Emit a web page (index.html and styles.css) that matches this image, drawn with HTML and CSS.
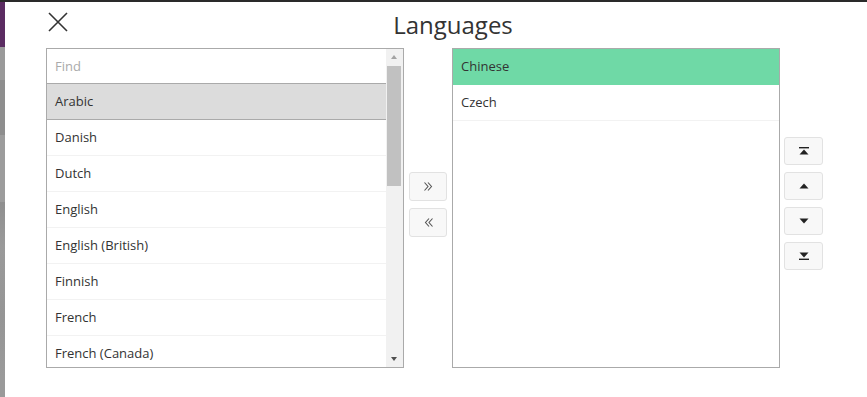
FILE: index.html
```html
<!DOCTYPE html>
<html>
<head>
<meta charset="utf-8">
<link rel="stylesheet" href="styles.css">
</head>
<body>
<div class="topbar"></div>
<div class="frame">
  <div class="backdrop">
    <div class="bd-purple"></div>
    <div class="bd-grey"></div>
  </div>
  <div class="modal">
    <div class="header">
      <button class="close" aria-label="Close">
        <svg width="20" height="20" viewBox="0 0 20 20"><path d="M1 1 L19 19 M19 1 L1 19" stroke="#333" stroke-width="1.6" fill="none"/></svg>
      </button>
      <h1 class="title">Languages</h1>
    </div>
    <div class="main">
      <div class="list list-left">
        <div class="list-body">
          <div class="row find">Find</div>
          <div class="row sel">Arabic</div>
          <div class="row">Danish</div>
          <div class="row">Dutch</div>
          <div class="row">English</div>
          <div class="row">English (British)</div>
          <div class="row">Finnish</div>
          <div class="row">French</div>
          <div class="row last">French (Canada)</div>
        </div>
        <div class="scrollbar">
          <div class="sb-arrow up"></div>
          <div class="sb-track"><div class="sb-thumb"></div></div>
          <div class="sb-arrow down"></div>
        </div>
      </div>
      <div class="mid-btns">
        <button class="btn">
          <svg width="11" height="11" viewBox="0 0 11 11"><path d="M1.5 1.5 L5 5.5 L1.5 9.5 M5 1.5 L8.5 5.5 L5 9.5" stroke="#555" stroke-width="1.1" fill="none"/></svg>
        </button>
        <button class="btn">
          <svg width="11" height="11" viewBox="0 0 11 11"><path d="M9.5 1.5 L6 5.5 L9.5 9.5 M6 1.5 L2.5 5.5 L6 9.5" stroke="#555" stroke-width="1.1" fill="none"/></svg>
        </button>
      </div>
      <div class="list list-right">
        <div class="list-body">
          <div class="row active">Chinese</div>
          <div class="row">Czech</div>
        </div>
      </div>
      <div class="side-btns">
        <button class="btn btn-sm">
          <svg width="10" height="8" viewBox="0 0 10 8"><rect x="0" y="0" width="10" height="1.4" fill="#222"/><path d="M0.5 7.5 L5 2.5 L9.5 7.5 Z" fill="#222"/></svg>
        </button>
        <button class="btn btn-sm">
          <svg width="10" height="6" viewBox="0 0 10 6"><path d="M0.5 5.5 L5 0.5 L9.5 5.5 Z" fill="#222"/></svg>
        </button>
        <button class="btn btn-sm">
          <svg width="10" height="6" viewBox="0 0 10 6"><path d="M0.5 0.5 L5 5.5 L9.5 0.5 Z" fill="#222"/></svg>
        </button>
        <button class="btn btn-sm">
          <svg width="10" height="8" viewBox="0 0 10 8"><path d="M0.5 0.5 L5 5.5 L9.5 0.5 Z" fill="#222"/><rect x="0" y="6.6" width="10" height="1.4" fill="#222"/></svg>
        </button>
      </div>
    </div>
  </div>
</div>
</body>
</html>
```
FILE: styles.css
```css
* { box-sizing: border-box; }
html, body { margin: 0; padding: 0; }
body {
  width: 867px;
  height: 397px;
  overflow: hidden;
  background: #fff;
  font-family: "Open Sans", "Noto Sans", sans-serif;
  color: #333;
}
.topbar { height: 2px; background: #2a2a2a; }
.frame { display: flex; height: 395px; }
.backdrop { width: 5px; display: flex; flex-direction: column; }
.bd-purple { height: 45px; background: #5b2c62; }
.bd-grey { flex: 1; background: linear-gradient(#9a9a9a 0, #9a9a9a 33px, #8e8e8e 33px, #8e8e8e 88px, #9c9c9c 88px, #9c9c9c 155px, #8f8f8f 155px, #9a9a9a 200px, #959595 270px, #9a9a9a 330px); }
.modal { flex: 1; padding-left: 41px; }
.header { position: relative; height: 46px; display: flex; align-items: center; justify-content: center; }
.close {
  position: absolute; left: 2px; top: 10px;
  width: 20px; height: 20px; padding: 0; border: 0; background: none;
  display: flex;
}
.title {
  margin: 0 0 2px -7px;
  font-weight: 400;
  font-size: 24px;
  color: #333;
}
.main { display: flex; align-items: flex-start; }
.list {
  height: 320px;
  border: 1px solid #aaa;
  display: flex;
  background: #fff;
  overflow: hidden;
}
.list-left { width: 358px; }
.list-right { width: 328px; margin-left: 5px; }
.list-body { flex: 1; min-width: 0; }
.row {
  height: 36px;
  border-bottom: 1px solid #f2f2f2;
  padding-left: 8px;
  font-size: 13px;
  line-height: 35px;
  color: #333;
  white-space: nowrap;
}
.row.find { height: 35px; line-height: 34px; color: #aaa; border-bottom: 1px solid #aaa; }
.row.sel { background: #dcdcdc; border-bottom: 1px solid #aaa; }
.row.last { border-bottom: 0; }
.row.active { background: #6fd9a6; border-bottom: 0; }
.scrollbar { width: 17px; background: #f1f1f1; display: flex; flex-direction: column; }
.sb-arrow { height: 17px; position: relative; }
.sb-arrow::after {
  content: ""; position: absolute; left: 5px; top: 6px;
  border-left: 3.5px solid transparent; border-right: 3.5px solid transparent;
}
.sb-arrow.up::after { border-bottom: 4px solid #a3a3a3; }
.sb-arrow.down::after { border-top: 4px solid #505050; top: 7px; }
.sb-track { flex: 1; padding: 0 2px 0 1px; }
.sb-thumb { height: 120px; background: #c1c1c1; }
.mid-btns { display: flex; flex-direction: column; gap: 7px; margin-left: 5px; margin-top: 124px; }
.btn {
  width: 38px; height: 29px; padding: 0;
  border: 1px solid #e2e2e2; border-radius: 3px;
  background: #f8f8f8;
  display: flex; align-items: center; justify-content: center;
}
.side-btns { display: flex; flex-direction: column; gap: 7px; margin-left: 4px; margin-top: 89px; }
.btn-sm { width: 39px; height: 28px; }
```
